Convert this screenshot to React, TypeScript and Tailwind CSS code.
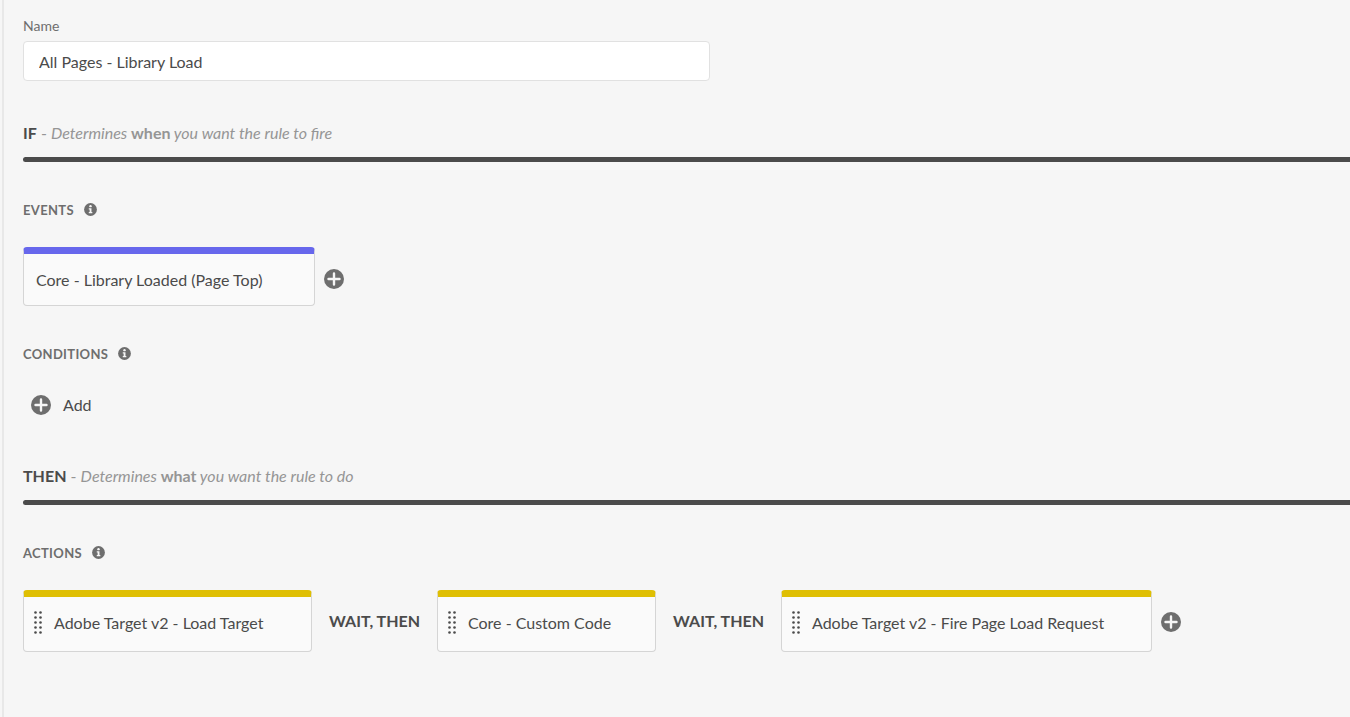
import { useState } from "react";
import type { ReactNode } from "react";
import clsx from "clsx";

const actions = [
  { id: "load-target", label: "Adobe Target v2 - Load Target", width: "w-[289px]" },
  { id: "custom-code", label: "Core - Custom Code", width: "w-[219px]" },
  { id: "fire-request", label: "Adobe Target v2 - Fire Page Load Request", width: "w-[371px]" },
];

const PlusIcon = () => (
  <svg className="size-5 shrink-0" viewBox="0 0 20 20" aria-hidden="true">
    <circle cx="10" cy="10" r="10" fill="#6e6e6e" />
    <path d="M10 4.5v11M4.5 10h11" stroke="#f6f6f6" strokeWidth="2.4" strokeLinecap="round" />
  </svg>
);

const InfoIcon = () => (
  <svg className="size-[13px]" viewBox="0 0 12 12" aria-hidden="true">
    <circle cx="6" cy="6" r="5.9" fill="#6e6e6e" />
    <circle cx="6" cy="2.9" r="1.1" fill="#f6f6f6" />
    <path d="M4.4 4.9h2.5v3.5h.8v1.1H4.4V8.4h.8V6h-.8z" fill="#f6f6f6" />
  </svg>
);

const DragHandle = () => (
  <svg className="h-6 w-2 shrink-0" viewBox="0 0 8 24" fill="#4b4b4b" aria-hidden="true">
    {[1.5, 6.5, 11.5, 16.5, 21.5].map((y) => (
      <g key={y}>
        <circle cx="1.5" cy={y} r="1.3" />
        <circle cx="6.5" cy={y} r="1.3" />
      </g>
    ))}
  </svg>
);

const StepHeading = ({ keyword, children }: { keyword: string; children: ReactNode }) => (
  <>
    <h2 className="text-base leading-6 text-[#959595]">
      <span className="font-bold text-[#4b4b4b]">{keyword}</span> - <em>{children}</em>
    </h2>
    <div className="mt-3 h-[5px] rounded-l-full bg-[#4b4b4b]" />
  </>
);

const SectionTitle = ({ children }: { children: string }) => (
  <div className="mt-[38px] mb-[27px] flex h-5 items-center gap-2.5">
    <h3 className="text-[13px] leading-5 font-bold tracking-wide text-[#6e6e6e] uppercase">{children}</h3>
    <button type="button" aria-label={`About ${children}`} className="mb-0.5">
      <InfoIcon />
    </button>
  </div>
);

const App = () => {
  const [name, setName] = useState("All Pages - Library Load");

  return (
    <div className="bg-[#f6f6f6] pl-[2px]">
      <main className="min-h-screen border-l-2 border-[#e8e8e8] pt-4 pl-[19px] font-['Lato',sans-serif] text-base text-[#4b4b4b]">
        <label htmlFor="rule-name" className="block text-sm leading-5 text-[#6e6e6e]">
          Name
        </label>
        <input
          id="rule-name"
          value={name}
          onChange={(e) => setName(e.target.value)}
          className="mt-[5px] mb-10 block h-10 w-full max-w-[687px] rounded border border-[#e1e1e1] bg-white px-[15px]"
        />

        <StepHeading keyword="IF">
          Determines <strong className="not-italic">when</strong> you want the rule to fire
        </StepHeading>

        <SectionTitle>Events</SectionTitle>
        <div className="flex items-center gap-[9px]">
          <button
            type="button"
            className="h-[59px] w-[292px] rounded border border-t-7 border-[#d5d5d5] border-t-[#6767ec] bg-[#fafafa] pl-3 text-left"
          >
            Core - Library Loaded (Page Top)
          </button>
          <button type="button" aria-label="Add event" className="pt-1">
            <PlusIcon />
          </button>
        </div>

        <SectionTitle>Conditions</SectionTitle>
        <button type="button" className="mb-[45px] flex h-7 items-center gap-3 px-2">
          <PlusIcon />
          Add
        </button>

        <StepHeading keyword="THEN">
          Determines <strong className="not-italic">what</strong> you want the rule to do
        </StepHeading>

        <SectionTitle>Actions</SectionTitle>
        <div className="flex items-center">
          {actions.map((action, index) => (
            <div key={action.id} className="flex items-center">
              {index > 0 && <span className="w-[125px] text-center font-bold">WAIT, THEN</span>}
              <button
                type="button"
                className={clsx(
                  "flex h-[62px] items-center gap-3 rounded border border-t-7 border-[#d5d5d5] border-t-[#dfbf03] bg-[#fafafa] pb-0.5 pl-[10px] whitespace-nowrap",
                  action.width,
                )}
              >
                <DragHandle />
                {action.label}
              </button>
            </div>
          ))}
          <button type="button" aria-label="Add action" className="ml-[9px] pt-0.5">
            <PlusIcon />
          </button>
        </div>
      </main>
    </div>
  );
};

export default App;
